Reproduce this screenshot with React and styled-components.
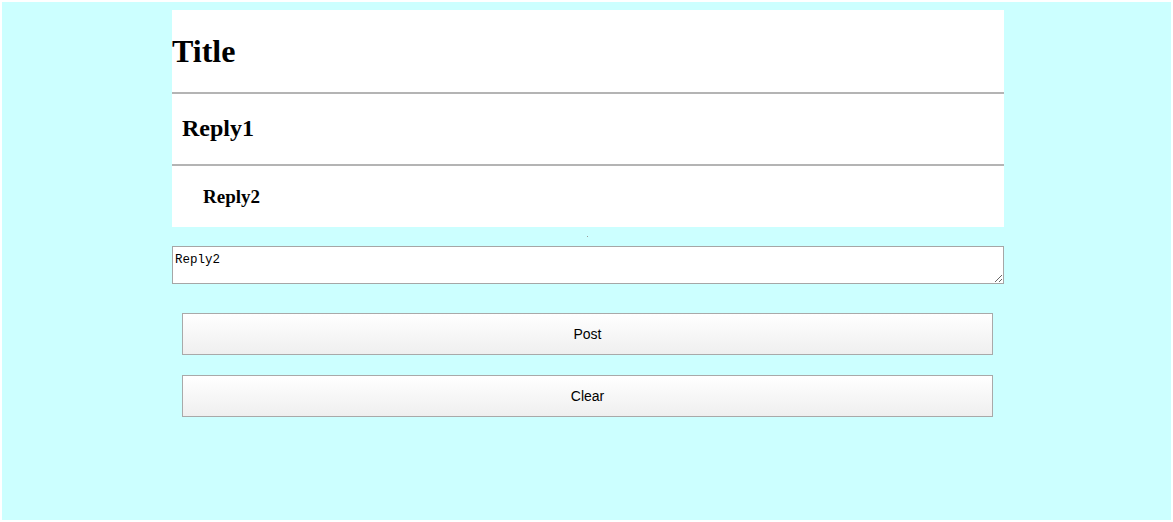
import React from "react";
import styled, { createGlobalStyle } from "styled-components";

const Global = createGlobalStyle`
  html { background: #ffffff; }
  body {
    margin: 2px;
    min-height: 518px;
    background: #ccffff;
    font-family: "Liberation Serif", "Times New Roman", serif;
  }
  * { box-sizing: border-box; }
`;

const Page = styled.div`
  padding: 8px 0 0 170px;
`;

const Column = styled.div`
  width: 832px;
  display: flex;
  flex-direction: column;
`;

const Thread = styled.div`
  background: #ffffff;
  display: flex;
  flex-direction: column;
`;

const Post = styled.div`
  margin: 0;
  font-weight: bold;
  color: #000;
  font-size: ${(p) => p.$size}px;
  line-height: ${(p) => p.$lh}px;
  padding: ${(p) => p.$pad};
  border-bottom: ${(p) => (p.$last ? "none" : "2px solid #b4b4b4")};
`;

const Gap = styled.div`
  height: 19px;
  display: flex;
  justify-content: center;
  padding-top: 9px;
`;

const Dot = styled.div`
  width: 1px;
  height: 1px;
  background: #9a9a9a;
  margin-left: -2px;
`;

const Editor = styled.textarea`
  display: block;
  width: 832px;
  height: 38px;
  margin: 0;
  padding: 6px 2px 2px;
  border: 1px solid #a6a6a6;
  background: #fff;
  font-family: "Liberation Mono", "Courier New", monospace;
  font-size: 12.5px;
  line-height: 14px;
  color: #000;
  resize: both;
  outline: none;
`;

const Actions = styled.div`
  display: flex;
  flex-direction: column;
  gap: 20px;
  padding: 29px 11px 0 10px;
`;

const Button = styled.button`
  height: 42px;
  width: 100%;
  margin: 0;
  border: 1px solid #a9a9a9;
  border-radius: 0;
  background: linear-gradient(#ffffff, #efefef);
  font-family: "Liberation Sans", Arial, sans-serif;
  font-size: 14px;
  color: #000;
  cursor: pointer;
`;

export default function App() {
  return (
    <>
      <Global />
      <Page>
        <Column>
          <Thread>
            <Post $size={32} $lh={35} $pad="24px 0 23px 0">Title</Post>
            <Post $size={24} $lh={27} $pad="21px 0 22px 10px">Reply1</Post>
            <Post $size={19} $lh={21} $pad="20px 0 20px 31px" $last>Reply2</Post>
          </Thread>
          <Gap>
            <Dot />
          </Gap>
          <Editor defaultValue="Reply2" />
          <Actions>
            <Button>Post</Button>
            <Button>Clear</Button>
          </Actions>
        </Column>
      </Page>
    </>
  );
}
